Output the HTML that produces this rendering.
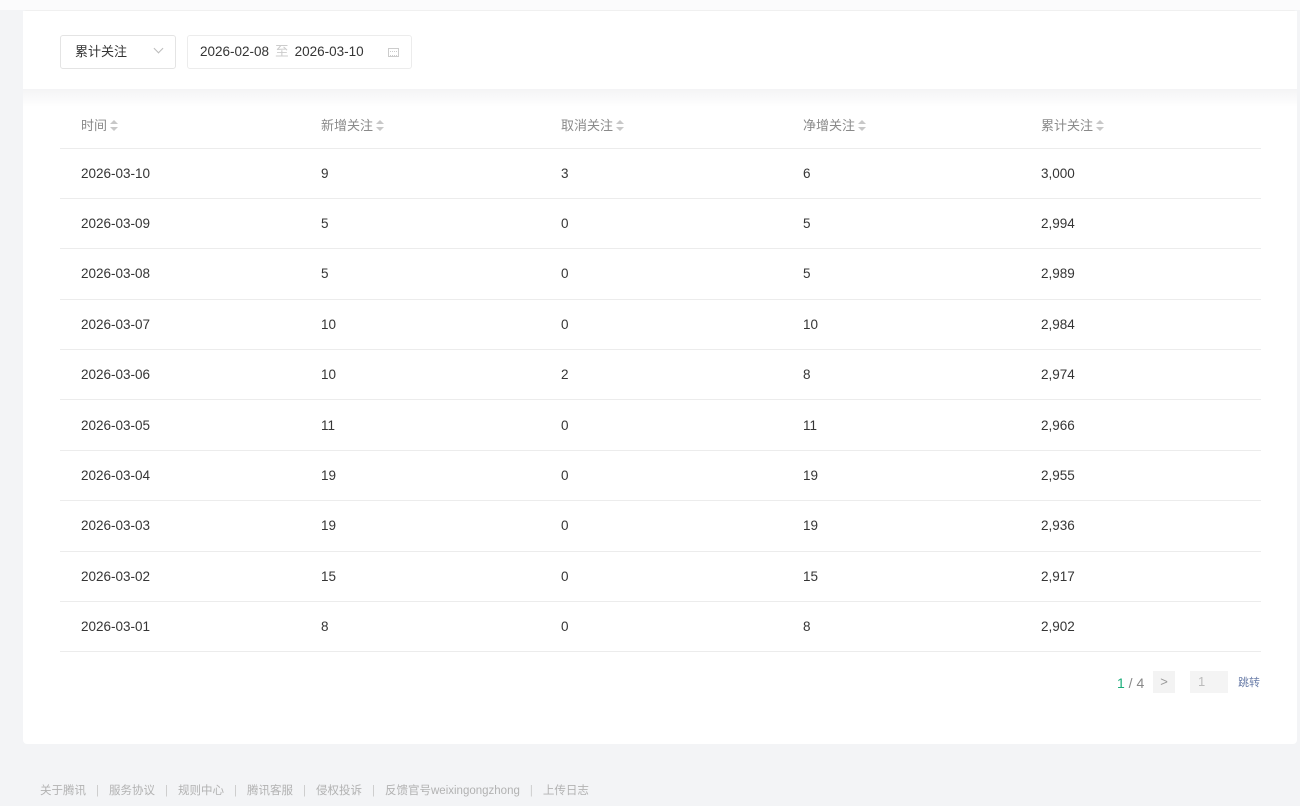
<!DOCTYPE html>
<html><head><meta charset="utf-8"><style>
*{margin:0;padding:0;box-sizing:border-box}
body{width:1300px;height:806px;background:#f3f4f6;font-family:"Liberation Sans","Noto Sans CJK SC",sans-serif;position:relative;overflow:hidden;color:#353535}
.tb{position:absolute;left:0;top:0;width:1300px;height:10px;background:#fbfbfc}
.card{position:absolute;left:23px;top:10px;width:1274px;height:734px;background:#fff;border-radius:4px;border-top:1px solid #f0f0f0}
.top{position:absolute;left:0;top:0;width:100%;height:78px;background:#fff}
.strip{position:absolute;left:0;top:78px;width:100%;height:18px;background:linear-gradient(#f4f4f5,#fff)}
.sel{position:absolute;left:37px;top:24px;width:116px;height:34px;border:1px solid #e4e4e4;border-radius:3px;font-size:13px;line-height:32px;padding-left:14px}
.sel .ar{position:absolute;left:94px;top:9px;width:7px;height:7px;border-right:1px solid #bbb;border-bottom:1px solid #bbb;transform:rotate(45deg)}
.date{position:absolute;left:164px;top:24px;width:225px;height:34px;border:1px solid #ececec;border-radius:3px;font-size:13.5px;line-height:32px;padding-left:12px}
.date .z{color:#ccc;margin:0 6px}
.cal{position:absolute;left:200px;top:12px;width:11px;height:9px;border:1px solid #ccc}
.cal:after{content:"";position:absolute;left:1px;top:2px;width:7px;height:3px;border-top:1px dotted #ccc;border-bottom:1px dotted #ccc}
.row{position:absolute;left:37px;width:1201px;height:50.4px;border-bottom:1px solid #ececec;font-size:13.5px}
.row span{position:absolute;top:0;line-height:50px}
.hd{color:#8a8a8a;font-size:13px}
.s{display:inline-block;width:7px;height:11px;position:relative;vertical-align:-1px;margin-left:3px}
.s:before,.s:after{content:"";position:absolute;left:0;border-left:4px solid transparent;border-right:4px solid transparent}
.s:before{top:0;border-bottom:4px solid #c8c8c8}
.s:after{bottom:0;border-top:4px solid #c8c8c8}
.pg{position:absolute;top:660px;font-size:13px}
.foot{position:absolute;left:40px;top:782px;font-size:11.5px;color:#b2b2b2;white-space:nowrap}
.foot i{font-style:normal;margin:0 10px;color:#ccc}
</style></head><body>
<div class="tb"></div>
<div class="card">
<div class="top">
<div class="sel">累计关注<div class="ar"></div></div>
<div class="date">2026-02-08<span class="z">至</span>2026-03-10<div class="cal"></div></div>
</div>
<div class="strip"></div>
<div class="row hd" style="top:90px;height:47.5px"><span style="left:21px;line-height:50px">时间<i class="s"></i></span><span style="left:261px">新增关注<i class="s"></i></span><span style="left:501px">取消关注<i class="s"></i></span><span style="left:743px">净增关注<i class="s"></i></span><span style="left:981px">累计关注<i class="s"></i></span></div>
<div id="rows"></div>
<div class="pg" style="left:1094px;color:#888;line-height:24px;font-size:14px"><span style="color:#1aad7a">1</span> / 4</div>
<div class="pg" style="left:1130px;width:22px;height:22px;background:#f3f3f3;color:#999;text-align:center;line-height:22px">&gt;</div>
<div class="pg" style="left:1167px;width:38px;height:22px;background:#f4f4f4;color:#bbb;padding-left:8px;line-height:22px">1</div>
<div class="pg" style="left:1215px;color:#6a7da8;font-size:11px;line-height:24px">跳转</div>
</div>
<div class="foot">关于腾讯<i>|</i>服务协议<i>|</i>规则中心<i>|</i>腾讯客服<i>|</i>侵权投诉<i>|</i>反馈官号weixingongzhong<i>|</i>上传日志</div>
<script>
var d=[["2026-03-10",9,3,6,"3,000"],["2026-03-09",5,0,5,"2,994"],["2026-03-08",5,0,5,"2,989"],["2026-03-07",10,0,10,"2,984"],["2026-03-06",10,2,8,"2,974"],["2026-03-05",11,0,11,"2,966"],["2026-03-04",19,0,19,"2,955"],["2026-03-03",19,0,19,"2,936"],["2026-03-02",15,0,15,"2,917"],["2026-03-01",8,0,8,"2,902"]];
var x=[21,261,501,743,981],h="";
d.forEach(function(r,i){h+='<div class="row" style="top:'+(137.5+i*50.4)+'px">';r.forEach(function(c,j){h+='<span style="left:'+x[j]+'px">'+c+'</span>'});h+='</div>'});
document.getElementById('rows').innerHTML=h;
</script>
</body></html>
